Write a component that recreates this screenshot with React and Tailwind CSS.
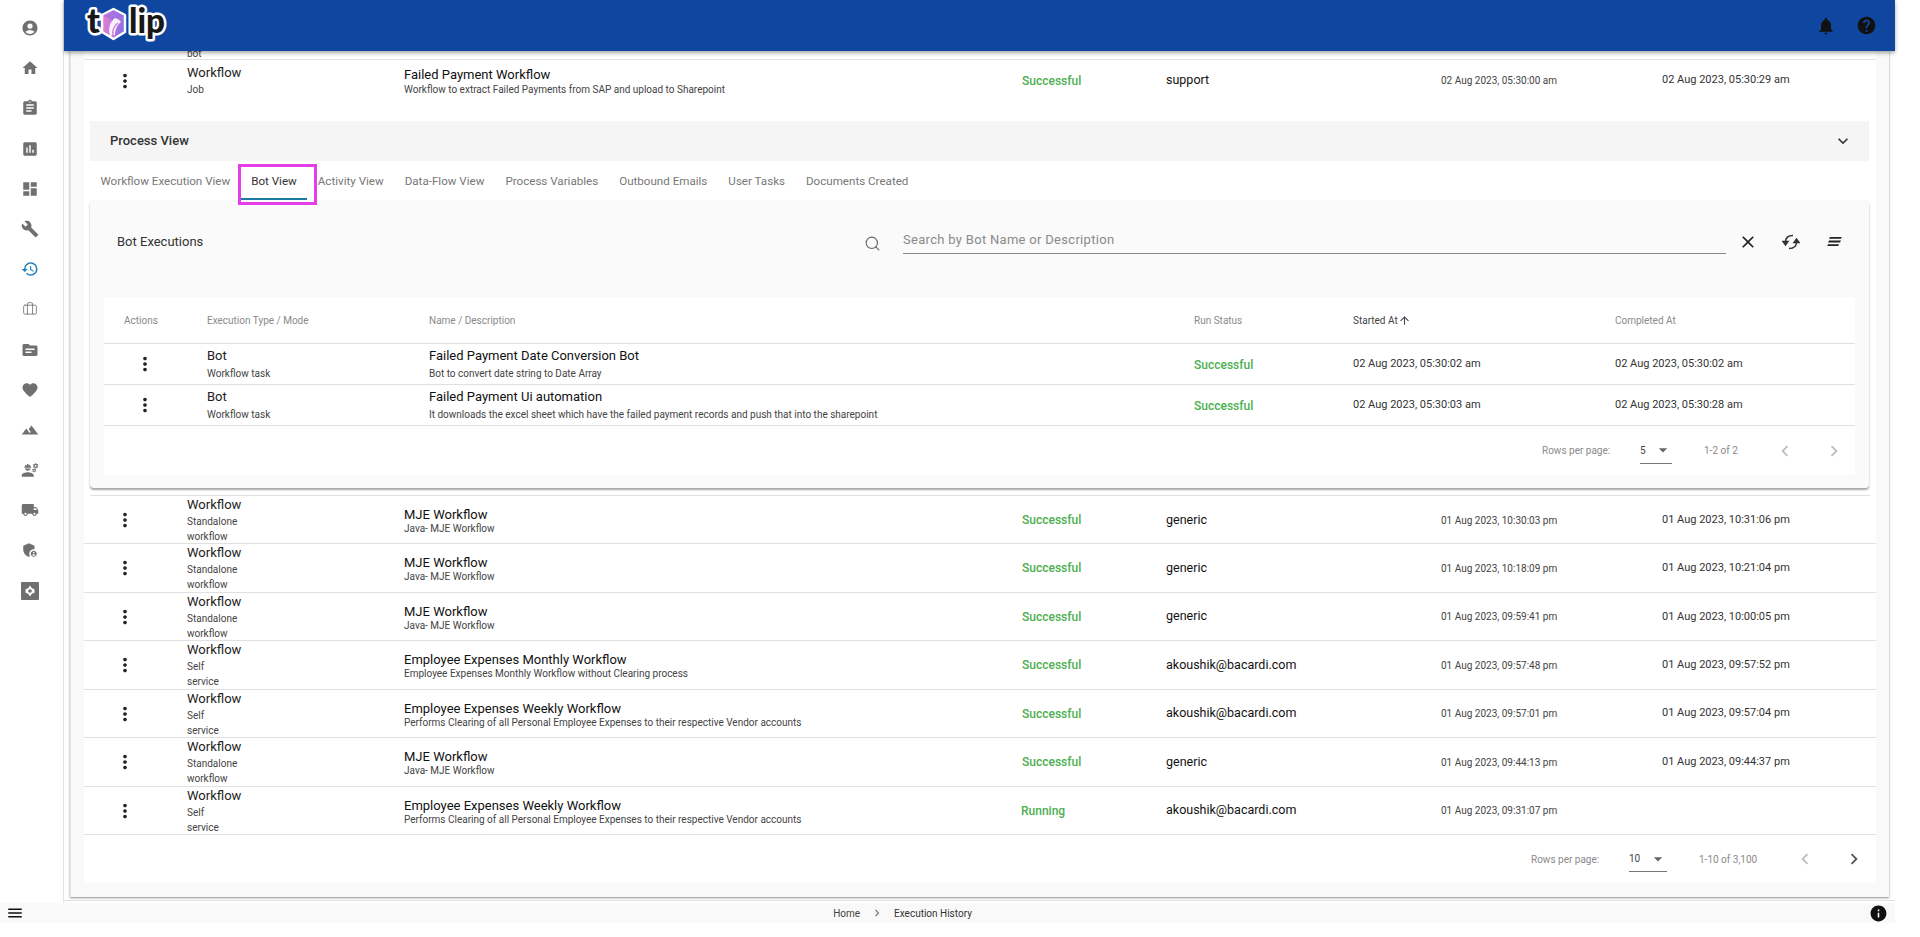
import {
  MdAccountCircle, MdHome, MdAssignment, MdAssessment, MdDashboard, MdBuild, MdRestore,
  MdTopic, MdFavorite, MdTerrain, MdEngineering, MdLocalShipping, MdAdminPanelSettings,
  MdNotifications, MdHelp, MdInfo, MdMenu, MdMoreVert, MdExpandMore, MdArrowDropDown, MdArrowUpward,
  MdChevronLeft, MdChevronRight, MdClose,
} from "react-icons/md";
import { Search, Briefcase } from "lucide-react";

function SquareDot({ className }) {
  return (
    <svg viewBox="2 2 20 20" className={className} fill="currentColor">
      <path d="M3 2h18a1 1 0 0 1 1 1v18a1 1 0 0 1-1 1H3a1 1 0 0 1-1-1V3a1 1 0 0 1 1-1Zm9 4-2 3-3 1v4l3 1 2 3 2-3 3-1v-4l-3-1-2-3Z" fillRule="evenodd" />
      <circle cx="12" cy="12" r="2" />
    </svg>
  );
}

function ThinBriefcase({ className }) {
  return <Briefcase className={`${className} scale-[0.85]`} strokeWidth={1.3} />;
}

function SyncIcon() {
  return (
    <svg viewBox="0 0 18 18" className="w-[18px] h-[18px] text-[#333]" fill="none" stroke="currentColor" strokeWidth="1.5">
      <path d="M3.500 9C3.500 5 6 2.500 11 2.500" />
      <path d="M14.500 9c0 4-2.500 6.500-7.500 6.500" />
      <path d="M1 8.500h5L3.500 12Z" fill="currentColor" />
      <path d="M17 9.500h-5L14.500 6Z" fill="currentColor" />
    </svg>
  );
}

function SortIcon() {
  return (
    <svg viewBox="0 0 16 12" className="w-[15px] h-[11px] text-[#222]" fill="currentColor">
      <path d="M3 1h13l-1 2H2Z" />
      <path d="M2 5h13l-1 2H1Z" />
      <path d="M1 9h12l-1 2H0Z" />
    </svg>
  );
}

// logo box sits at x=84 in the header, so these are page x minus 84
function Logo() {
  return (
    <svg viewBox="0 0 100 51" className="w-[100px] h-[51px]">
      <defs>
        <linearGradient id="petal" x1="0" y1="0" x2="1" y2="0.4">
          <stop offset="0" stopColor="#ee7cc2" />
          <stop offset="0.55" stopColor="#c47be0" />
          <stop offset="1" stopColor="#8f6fe4" />
        </linearGradient>
      </defs>
      <g fontFamily="Lato, sans-serif" fontWeight="900" fontSize="34" fill="#171717" stroke="#fff" strokeWidth="5" strokeLinejoin="round" paintOrder="stroke">
        <text x="3" y="33">t</text>
        <text x="45" y="33" textLength="36" lengthAdjust="spacingAndGlyphs">lip</text>
      </g>
      <path d="M29.500 9 41 15v17l-11.500 7L18 32V15Z" fill="url(#petal)" stroke="#fff" strokeWidth="2.500" strokeLinejoin="round" />
      <path d="M29.500 10 40 15.500 29.500 21 19 15.500Z" fill="#8b6be2" opacity="0.55" />
      <path d="M26 36c-2-8 0-14 5-18 3 1 5 2 6 4-4 3-6 8-6 13Z" fill="#fff" opacity="0.9" />
      <path d="M29 36c-1-6 1-10 5-13" fill="none" stroke="#d57cd8" strokeWidth="1.500" />
    </svg>
  );
}

const navIcons = [
  MdAccountCircle, MdHome, MdAssignment, MdAssessment, MdDashboard, MdBuild, MdRestore, ThinBriefcase,
  MdTopic, MdFavorite, MdTerrain, MdEngineering, MdLocalShipping, MdAdminPanelSettings, SquareDot,
];

const tabs = [
  "Workflow Execution View", "Bot View", "Activity View", "Data-Flow View",
  "Process Variables", "Outbound Emails", "User Tasks", "Documents Created",
];

const botRows = [
  {
    name: "Failed Payment Date Conversion Bot",
    desc: "Bot to convert date string to Date Array",
    started: "02 Aug 2023, 05:30:02 am",
    completed: "02 Aug 2023, 05:30:02 am",
  },
  {
    name: "Failed Payment Ui automation",
    desc: "It downloads the excel sheet which have the failed payment records and push that into the sharepoint",
    started: "02 Aug 2023, 05:30:03 am",
    completed: "02 Aug 2023, 05:30:28 am",
  },
];

const weekly = "Performs Clearing of all Personal Employee Expenses to their respective Vendor accounts";

const rows = [
  { mode: ["Standalone", "workflow"], name: "MJE Workflow", desc: "Java- MJE Workflow", status: "Successful", by: "generic", started: "01 Aug 2023, 10:30:03 pm", completed: "01 Aug 2023, 10:31:06 pm" },
  { mode: ["Standalone", "workflow"], name: "MJE Workflow", desc: "Java- MJE Workflow", status: "Successful", by: "generic", started: "01 Aug 2023, 10:18:09 pm", completed: "01 Aug 2023, 10:21:04 pm" },
  { mode: ["Standalone", "workflow"], name: "MJE Workflow", desc: "Java- MJE Workflow", status: "Successful", by: "generic", started: "01 Aug 2023, 09:59:41 pm", completed: "01 Aug 2023, 10:00:05 pm" },
  { mode: ["Self", "service"], name: "Employee Expenses Monthly Workflow", desc: "Employee Expenses Monthly Workflow without Clearing process", status: "Successful", by: "akoushik@bacardi.com", started: "01 Aug 2023, 09:57:48 pm", completed: "01 Aug 2023, 09:57:52 pm" },
  { mode: ["Self", "service"], name: "Employee Expenses Weekly Workflow", desc: weekly, status: "Successful", by: "akoushik@bacardi.com", started: "01 Aug 2023, 09:57:01 pm", completed: "01 Aug 2023, 09:57:04 pm" },
  { mode: ["Standalone", "workflow"], name: "MJE Workflow", desc: "Java- MJE Workflow", status: "Successful", by: "generic", started: "01 Aug 2023, 09:44:13 pm", completed: "01 Aug 2023, 09:44:37 pm" },
  { mode: ["Self", "service"], name: "Employee Expenses Weekly Workflow", desc: weekly, status: "Running", by: "akoushik@bacardi.com", started: "01 Aug 2023, 09:31:07 pm", completed: "" },
];

const outerCols = "grid grid-cols-[103px_217px_618px_144px_275px_221px_1fr] items-center border-b border-[#e0e0e0]";
const innerCols = "grid grid-cols-[103px_222px_765px_159px_262px_1fr] items-center";

function Dots({ className }) {
  return <MdMoreVert className={`text-[22px] text-[#222] ${className}`} />;
}

function WorkflowRow({ row }) {
  return (
    <div className={`${outerCols} h-[48.43px]`}>
      <Dots className="ml-[30px]" />
      <div>
        <div className="text-[13px] leading-[18px] text-[#222]">Workflow</div>
        {row.mode.map((m) => (
          <div key={m} className="text-[10px] leading-[15px] text-[#444]">{m}</div>
        ))}
      </div>
      <div className="pt-[3px]">
        <div className="text-[13px] leading-[15px] text-[#111]">{row.name}</div>
        <div className="text-[10px] leading-[14px] text-[#444]">{row.desc}</div>
      </div>
      <div className={`text-[12px] font-medium text-[#4caf50] ${row.status === "Running" ? "-ml-px" : ""}`}>{row.status}</div>
      <div className="text-[12.500px] text-[#111]">{row.by}</div>
      <div className="text-[10px] text-[#444]">{row.started}</div>
      <div className="text-[11px] text-[#333]">{row.completed}</div>
    </div>
  );
}

function Pagination({ perPage, range, className, selectWidth, rangeWidth, nextColor }) {
  return (
    <div className={`flex items-center text-[10px] text-[#8a8a8a] ${className}`}>
      <span className="w-[98px] whitespace-nowrap">Rows per page:</span>
      <div className={`flex items-center h-[26px] border-b border-[#777] text-[#444] ${selectWidth}`}>
        <span>{perPage}</span>
        <MdArrowDropDown className="text-[20px] text-[#666] ml-auto -mr-[1px]" />
      </div>
      <span className={`ml-[32px] whitespace-nowrap ${rangeWidth}`}>{range}</span>
      <MdChevronLeft className="ml-[36px] text-[22px] text-[#bdbdbd]" />
      <MdChevronRight className={`ml-[27px] text-[22px] ${nextColor}`} />
    </div>
  );
}

function BotCard() {
  return (
    <div className="bg-[#fafafa] h-[288px] rounded-[4px] shadow-[0_2px_2px_rgba(0,0,0,0.35)] px-[14px]">
      <div className="flex items-center h-[97px] pb-[11px]">
        <div className="w-[768px] pl-[13px] pb-[3px] text-[13px] text-[#333]">Bot Executions</div>
        <Search className="w-[17px] h-[17px] text-[#666] ml-[-8px]" strokeWidth={1.6} />
        <div className="ml-[22px] flex items-center h-[22px] w-[823px] border-b border-[#888] text-[13px] tracking-[0.3px] text-[#8a8a8a] pb-[6px]">
          Search by Bot Name or Description
        </div>
        <MdClose className="ml-[12px] mb-[3px] text-[20px] text-[#222]" />
        <div className="ml-[24px] mb-[3px]"><SyncIcon /></div>
        <div className="ml-[27px] mb-[3px]"><SortIcon /></div>
      </div>
      <div className="bg-white h-[178px]">
        <div className={`${innerCols} h-[47px] border-b border-[#e0e0e0] text-[10px] text-[#8a8a8a]`}>
          <span className="pl-[20px]">Actions</span>
          <span>Execution Type / Mode</span>
          <span>Name / Description</span>
          <span>Run Status</span>
          <span className="flex items-center text-[#444]">Started At<MdArrowUpward className="text-[13px] text-[#444]" /></span>
          <span>Completed At</span>
        </div>
        {botRows.map((r) => (
          <div key={r.name} className={`${innerCols} h-[41px] border-b border-[#e0e0e0]`}>
            <Dots className="ml-[30px]" />
            <div className="pt-[1px]">
              <div className="text-[13px] leading-[18px] text-[#222]">Bot</div>
              <div className="text-[10px] leading-[17px] text-[#444]">Workflow task</div>
            </div>
            <div className="pt-[1px]">
              <div className="text-[13px] leading-[18px] text-[#111]">{r.name}</div>
              <div className="text-[10px] leading-[17px] text-[#444]">{r.desc}</div>
            </div>
            <div className="text-[12px] font-medium text-[#4caf50] pt-[1px]">Successful</div>
            <div className="text-[11px] text-[#333]">{r.started}</div>
            <div className="text-[11px] text-[#333]">{r.completed}</div>
          </div>
        ))}
        <Pagination
          perPage="5"
          range="1-2 of 2"
          className="justify-end h-[49px] pr-[10px]"
          selectWidth="w-[32px]"
          rangeWidth="w-[34px]"
          nextColor="text-[#bdbdbd]"
        />
      </div>
    </div>
  );
}

export default function App() {
  return (
    <div className="h-screen w-screen overflow-hidden bg-white font-['Roboto',sans-serif]">
      <div className="w-[1895px] h-[923px] flex flex-col">
        <div className="flex flex-1 min-h-0">
          <aside className="w-[64px] shrink-0 border-r border-[#e4e4e4] bg-white flex flex-col items-center pr-[3px] pt-[19px] gap-[22.2px]">
            {navIcons.map((Icon, i) => (
              <Icon key={i} className={`w-[18px] h-[18px] ${i === 6 ? "text-[#1a7fb5]" : "text-[#707070]"}`} />
            ))}
          </aside>
          <main className="flex-1 min-w-0 flex flex-col">
            <header className="h-[51px] shrink-0 relative z-10 bg-[#0f47a0] shadow-[0_2px_4px_rgba(0,0,0,0.35)] flex items-center pl-[20px] pr-[18px]">
              <Logo />
              <MdNotifications className="ml-auto text-[20px] text-[#111]" />
              <MdHelp className="ml-[20px] text-[21px] text-[#111]" />
            </header>
            <div className="flex-1 min-h-0 px-[6px] pb-[3px] mb-[2px] border-b border-[#e0e0e0]">
              <div className="h-full bg-[#f9f9f9] border-l border-[#e8e8e8] shadow-[0_1px_2px_rgba(0,0,0,0.45)] pl-[13px] pr-[13px] overflow-hidden">
                <div className="bg-white h-[832px] overflow-hidden">
                  <div className="h-[9px] overflow-hidden border-b border-[#e0e0e0]">
                    <div className="ml-[103px] -mt-[5px] text-[10px] leading-[15px] text-[#444]">bot</div>
                  </div>
                  <div className={`${outerCols} h-[41px] border-b-0`}>
                    <Dots className="ml-[30px]" />
                    <div>
                      <div className="text-[13px] leading-[18px] text-[#222]">Workflow</div>
                      <div className="text-[10px] leading-[15px] text-[#444]">Job</div>
                    </div>
                    <div className="mt-[3px]">
                      <div className="text-[13px] leading-[15px] text-[#111]">Failed Payment Workflow</div>
                      <div className="text-[10px] leading-[15px] text-[#444]">Workflow to extract Failed Payments from SAP and upload to Sharepoint</div>
                    </div>
                    <div className="text-[12px] font-medium text-[#4caf50]">Successful</div>
                    <div className="text-[12.500px] text-[#111]">support</div>
                    <div className="text-[10px] text-[#444]">02 Aug 2023, 05:30:00 am</div>
                    <div className="text-[11px] text-[#333]">02 Aug 2023, 05:30:29 am</div>
                  </div>
                  <div className="mt-[20px] mx-[6px] pr-[1px] border-b border-[#e0e0e0] pb-[7px]">
                    <div className="h-[40px] bg-[#f5f5f5] flex items-center pl-[20px] pr-[16px] text-[13px] font-medium text-[#333]">
                      Process View
                      <MdExpandMore className="ml-auto text-[20px] text-[#333]" />
                    </div>
                    <div className="relative flex h-[39px] items-center pt-[3px]">
                      {tabs.map((t) => (
                        <div key={t} className={`px-[10.500px] text-[11.600px] whitespace-nowrap ${t === "Bot View" ? "text-[#333]" : "text-[#777]"}`}>
                          {t}
                        </div>
                      ))}
                      <div className="absolute left-[151px] top-[37px] w-[66px] h-[2px] bg-[#1a7aa5]" />
                      <div className="absolute left-[148px] top-[3px] w-[79px] h-[41px] border-[3px] border-[#e53ee8]" />
                    </div>
                    <BotCard />
                  </div>
                  {rows.map((r, i) => (
                    <WorkflowRow key={i} row={r} />
                  ))}
                  <Pagination
                    perPage="10"
                    range="1-10 of 3,100"
                    className="justify-end h-[49px] pr-[11px]"
                    selectWidth="w-[38px]"
                    rangeWidth="w-[59px]"
                    nextColor="text-[#555]"
                  />
                </div>
              </div>
            </div>
          </main>
        </div>
        <footer className="h-[20px] shrink-0 bg-[#f9f9f9] flex items-center pl-[6px] pr-[7px] text-[10px] text-[#444]">
          <MdMenu className="text-[18px] text-[#111]" />
          <div className="flex-1 flex items-center justify-center pr-[88px]">
            <span>Home</span>
            <MdChevronRight className="mx-[10px] text-[14px] text-[#777]" />
            <span className="text-[#333]">Execution History</span>
          </div>
          <MdInfo className="text-[19px] text-[#111]" />
        </footer>
      </div>
    </div>
  );
}
